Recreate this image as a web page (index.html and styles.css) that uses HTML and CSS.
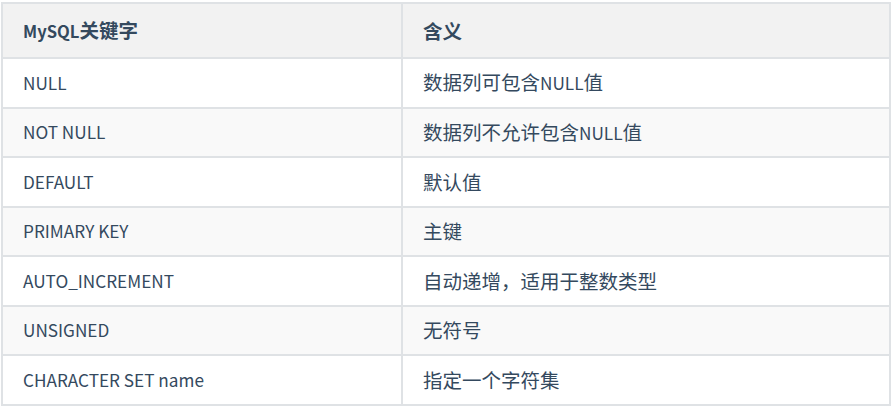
FILE: index.html
```html
<!DOCTYPE html>
<html lang="zh-CN">
<head>
<meta charset="utf-8">
<title>MySQL关键字</title>
<link rel="stylesheet" href="styles.css">
</head>
<body>
<table class="kw-table">
  <thead>
    <tr class="head-row"><th class="col-key"><span class="lat head-lat">MySQL</span>关键字</th><th>含义</th></tr>
  </thead>
  <tbody>
    <tr><td class="key">NULL</td><td>数据列可包含<span class="lat">NULL</span>值</td></tr>
    <tr><td class="key">NOT NULL</td><td>数据列不允许包含<span class="lat">NULL</span>值</td></tr>
    <tr><td class="key">DEFAULT</td><td>默认值</td></tr>
    <tr><td class="key">PRIMARY KEY</td><td>主键</td></tr>
    <tr><td class="key">AUTO_INCREMENT</td><td>自动递增，适用于整数类型</td></tr>
    <tr><td class="key">UNSIGNED</td><td>无符号</td></tr>
    <tr><td class="key">CHARACTER SET name</td><td>指定一个字符集</td></tr>
  </tbody>
</table>
</body>
</html>
```

FILE: styles.css
```css
html, body {
  margin: 0;
  padding: 0;
  background: #ffffff;
}
body {
  padding: 2px 0 0 1px;
  font-family: "Noto Sans CJK SC", "Noto Sans", sans-serif;
  color: #34495e;
  font-size: 19.5px;
}
.kw-table {
  border-collapse: collapse;
  width: 890px;
  table-layout: fixed;
}
.kw-table tr {
  height: 49.5px;
}
.kw-table .head-row {
  height: 55px;
}
.kw-table th,
.kw-table td {
  border: 2px solid #dfe2e5;
  text-align: left;
  vertical-align: middle;
  padding: 0 20px;
  line-height: 24px;
  white-space: nowrap;
}
.kw-table th {
  background: #f2f2f2;
  font-weight: 700;
}
.kw-table .col-key {
  width: 358px;
}
.kw-table tbody tr:nth-child(even) td {
  background: #f9f9f9;
}
.kw-table .key,
.kw-table .lat {
  font-size: 17.2px;
}
.kw-table .head-lat {
  font-size: 16.6px;
}
```
